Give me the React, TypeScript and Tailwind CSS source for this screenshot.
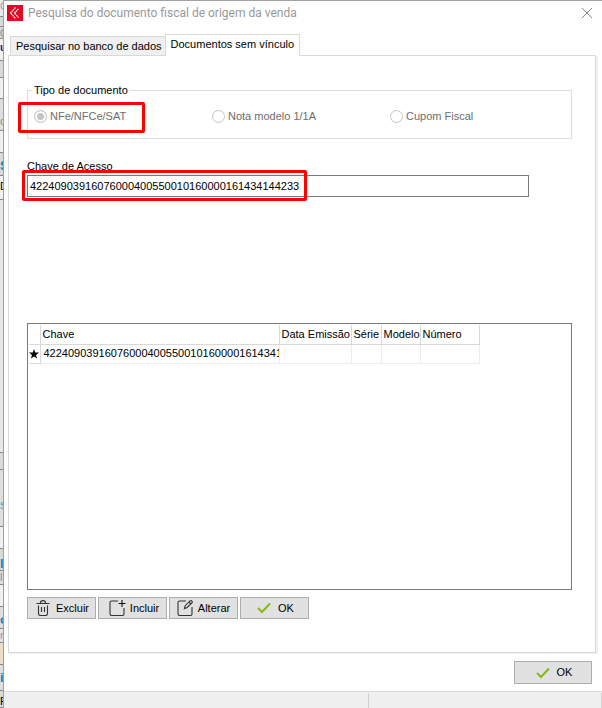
import type { ReactNode } from "react";

type Slice = { h: string; bg: string; text?: string; tone?: string };

const slices: Slice[] = [
  { h: "h-[17px]", bg: "bg-[#ececec]", text: "C", tone: "text-[#a0a0a0]" },
  { h: "h-[10px]", bg: "bg-[#d9d9d9]" },
  { h: "h-[12px]", bg: "bg-[#d9d9d9]", text: "O", tone: "text-[#909090]" },
  { h: "h-[22px]", bg: "bg-[#f0f0f0]", text: "u", tone: "pt-0.5 text-[#3a1a7a] font-bold" },
  { h: "h-[17px]", bg: "bg-[#d9d9d9]" },
  { h: "h-[21px]", bg: "bg-[#f0f0f0]" },
  { h: "h-[32px]", bg: "bg-[#dedede]", text: "o", tone: "pt-4 text-[#909090]" },
  { h: "h-[22px]", bg: "bg-[#f0f0f0]" },
  { h: "h-[23px]", bg: "bg-[#d9d9d9]", text: "S", tone: "pt-1.5 text-[13px] text-[#1583b5] font-bold" },
  { h: "h-[24px]", bg: "bg-[#f0f0f0]", text: "D", tone: "pt-1 text-black" },
  { h: "h-[253px]", bg: "bg-[#e8e8e8]" },
  { h: "h-[17px]", bg: "bg-[#d9d9d9]" },
  { h: "h-[57px]", bg: "bg-[#dedede]", text: "s", tone: "pt-7 text-[13px] text-[#35a5cf]" },
  { h: "h-[22px]", bg: "bg-[#f0f0f0]" },
  { h: "h-[22px]", bg: "bg-[#d9d9d9]", text: "lo", tone: "pt-2 text-[13px] text-[#1583b5] font-bold" },
  { h: "h-[14px]", bg: "bg-[#dedede]", text: "l", tone: "text-[#8a8aa8]" },
  { h: "h-[22px]", bg: "bg-[#f0f0f0]" },
  { h: "h-[22px]", bg: "bg-[#dedede]", text: "o", tone: "pt-1.5 text-[13px] text-[#1583b5] font-bold" },
  { h: "h-[14px]", bg: "bg-[#e4e4e4]", text: "n", tone: "text-[#9a90a8]" },
  { h: "h-[22px]", bg: "bg-[#f0dcc8]" },
  { h: "h-[26px]", bg: "bg-[#dedede]", text: "ic", tone: "pt-1.5 text-[13px] text-[#1583b5] font-bold" },
  { h: "h-[17px]", bg: "bg-[#d9d9d9]", text: "R", tone: "pt-1 text-black" },
];

const columns = [
  { label: "Chave", w: "w-[239px]" },
  { label: "Data Emissão", w: "w-[72px]" },
  { label: "Série", w: "w-[30px]" },
  { label: "Modelo", w: "w-[39px]" },
  { label: "Número", w: "w-[59px]" },
];

function CheckIcon() {
  return (
    <svg width="14" height="12" viewBox="0 0 14 12" fill="none" stroke="#86b817" strokeWidth="2">
      <path d="M1 6l4 4 8-8.5" />
    </svg>
  );
}

function TrashIcon() {
  return (
    <svg width="14" height="16" viewBox="0 0 14 16" fill="none" stroke="#333" strokeWidth="1.1">
      <path d="M.5 3.5h13M4.4 3.2c0-3.4 5.2-3.4 5.2 0M2.5 5.5v8q0 2 2 2h5q2 0 2-2v-8M5.5 7v5M8.5 7v5" />
    </svg>
  );
}

function AddIcon() {
  return (
    <svg width="17" height="16" viewBox="0 0 17 16" fill="none" stroke="#333" strokeWidth="1.1">
      <path d="M9 1H2.5Q1 1 1 2.5v11Q1 15.5 2.5 15.5h11q1.5 0 1.5-1.5V8" />
      <path d="M13 0v7M9.5 3.5h7" stroke="#111" />
    </svg>
  );
}

function EditIcon() {
  return (
    <svg width="17" height="16" viewBox="0 0 17 16" fill="none" stroke="#333" strokeWidth="1.1">
      <path d="M9 1H2.5Q1 1 1 2.5v11Q1 15.5 2.5 15.5h11q1.5 0 1.5-1.5V7" />
      <path d="M7.5 8.5l.7-2.8 5-5q1.6-.6 2.2 1.6l-5.2 5.2zM12 2l2 2" />
    </svg>
  );
}

function ActionButton({ icon, label, size }: { icon: ReactNode; label: string; size: string }) {
  return (
    <button type="button" className={`flex items-center justify-center border border-[#adadad] bg-[#e1e1e1] ${size}`}>
      {icon}
      <span>{label}</span>
    </button>
  );
}

function DocType({ label, checked }: { label: string; checked?: boolean }) {
  return (
    <label className="flex flex-1 items-center gap-[3px] text-[#6d6d6d]">
      <input
        type="radio"
        name="tipo"
        disabled
        defaultChecked={checked}
        className="size-[13px] shrink-0 appearance-none rounded-full border border-[#c4c4c4] bg-white checked:bg-[#c4c4c4] checked:shadow-[inset_0_0_0_2px_white]"
      />
      {label}
    </label>
  );
}

export default function App() {
  return (
    <div className="flex min-h-screen overflow-hidden bg-white font-['Liberation_Sans',Arial,sans-serif] text-[11px] leading-[13px] text-black">
      <div className="flex w-1 shrink-0 flex-col overflow-hidden border-r border-[#a0a0a0]">
        {slices.map((s, i) => (
          <div key={i} className={`shrink-0 overflow-hidden border-b border-[#888] leading-[13px] ${s.h} ${s.bg} ${s.tone ?? ""}`}>
            {s.text}
          </div>
        ))}
      </div>

      <div className="flex min-w-0 flex-1 flex-col border-t border-[#a0a0a0]">
        <header className="flex h-[33px] items-start pt-1 pr-[7px] pl-[3px]">
          <svg width="16" height="16" viewBox="0 0 16 16" className="shrink-0" fill="none">
            <rect width="16" height="16" fill="#dc0a22" />
            <path d="M8.5 2.5L3.5 8l5 5.5M11.5 4L7.5 8l4 4.5" stroke="#fff" strokeWidth="1.2" strokeDasharray="1.6 .5" />
          </svg>
          <h1 className="ml-[5px] flex-1 font-[Roboto,'Open_Sans',sans-serif] text-[12px] leading-4 text-[#999]">
            Pesquisa do documento fiscal de origem da venda
          </h1>
          <button type="button" aria-label="Fechar" className="p-[3px]">
            <svg width="10" height="10" viewBox="0 0 10 10" stroke="#858585">
              <path d="M0 0l10 10M10 0L0 10" />
            </svg>
          </button>
        </header>

        <div role="tablist" className="z-10 -mb-px flex items-end pl-1.5">
          <button role="tab" type="button" aria-selected="false" className="mb-px h-[19px] border border-r-0 border-b-0 border-[#d9d9d9] bg-[#f0f0f0] pr-[3px] pl-[5px] whitespace-nowrap">
            Pesquisar no banco de dados
          </button>
          <button role="tab" type="button" aria-selected="true" className="h-[22px] border border-b-0 border-[#d9d9d9] bg-white px-[5px] pb-[2px] whitespace-nowrap">
            Documentos sem vínculo
          </button>
        </div>

        <main className="mr-1.5 ml-1 flex flex-1 flex-col border border-[#d9d9d9] px-[18px] pt-[28px] pb-[33px] shadow-[2px_1px_0_#f0f0f0]">
          <fieldset className="mr-[5px] border border-[#dcdcdc] pb-[15px]">
            <legend className="ml-1 px-0.5">Tipo de documento</legend>
            <div className="relative mt-[13px] flex pr-[3px] pl-1.5">
              <DocType label="NFe/NFCe/SAT" checked />
              <DocType label="Nota modelo 1/1A" />
              <DocType label="Cupom Fiscal" />
              <span className="pointer-events-none absolute -top-2 -left-[10px] h-[31px] w-[127px] rounded-[2px] border-3 border-[#ff0000]" />
            </div>
          </fieldset>

          <label htmlFor="chave" className="mt-[21px]">Chave de Acesso</label>
          <div className="relative mr-12 mt-[2px]">
            <input
              id="chave"
              defaultValue="42240903916076000400550010160000161434144233"
              className="block h-[22px] w-full border border-[#7a7a7a] bg-white px-[2px] outline-none"
            />
            <span className="pointer-events-none absolute -top-[5px] -left-[5px] h-[31px] w-[285px] rounded-[2px] border-3 border-[#ff0000]" />
          </div>

          <div className="mt-[126px] mr-[5px] flex-1 border border-[#7a7a7a] p-px">
            <table className="w-[450px] table-fixed border-collapse text-left">
              <thead>
                <tr className="h-[19px]">
                  <th className="w-[11px] border-r border-b border-[#d9d9d9]" />
                  {columns.map((c) => (
                    <th key={c.label} className={`border-r border-b border-[#d9d9d9] pl-0.5 font-normal whitespace-nowrap ${c.w}`}>
                      {c.label}
                    </th>
                  ))}
                </tr>
              </thead>
              <tbody>
                <tr className="h-[19px]">
                  <td className="border-r border-b border-[#d9d9d9]">
                    <svg width="10" height="10" viewBox="0 0 10 10">
                      <path d="M5 0l1.2 3.6H10L7 5.9 8.1 9.6 5 7.4 1.9 9.6 3 5.9 0 3.6h3.8z" />
                    </svg>
                  </td>
                  <td className="overflow-hidden border-r border-b border-[#ececec] pl-[3px] whitespace-nowrap">
                    42240903916076000400550010160000161434144233
                  </td>
                  <td className="border-r border-b border-[#ececec]" />
                  <td className="border-r border-b border-[#ececec]" />
                  <td className="border-r border-b border-[#ececec]" />
                  <td className="border-r border-b border-[#ececec]" />
                </tr>
              </tbody>
            </table>
          </div>

          <div className="mt-[7px] flex gap-0.5">
            <ActionButton size="h-[22px] w-[69px] gap-1.5 pl-0.5" icon={<TrashIcon />} label="Excluir" />
            <ActionButton size="h-[22px] w-[69px] gap-1 pl-[3px]" icon={<AddIcon />} label="Incluir" />
            <ActionButton size="h-[22px] w-[69px] gap-1" icon={<EditIcon />} label="Alterar" />
            <ActionButton size="h-[22px] w-[69px] gap-[7px] pl-0.5" icon={<CheckIcon />} label="OK" />
          </div>
        </main>

        <div className="flex justify-end pt-2 pr-[10px] pb-[7px]">
          <ActionButton size="h-[23px] w-[78px] gap-[7px] pl-0.5" icon={<CheckIcon />} label="OK" />
        </div>
        <footer className="flex h-[17px] border-t border-[#d9d9d9] bg-[#f0f0f0] pt-px">
          <div className="w-[365px] border-r border-[#d0d0d0]" />
          <div className="flex-1 border-r border-[#d0d0d0]" />
        </footer>
      </div>
    </div>
  );
}
